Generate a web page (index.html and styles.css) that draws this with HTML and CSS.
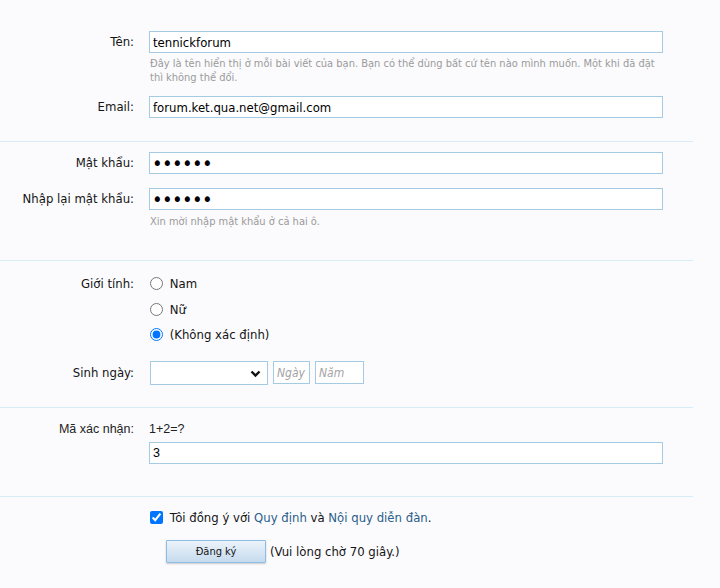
FILE: index.html
```html
<!DOCTYPE html>
<html lang="vi">
<head>
<meta charset="utf-8">
<title>Đăng ký</title>
<link rel="stylesheet" href="styles.css">
</head>
<body>
<form class="form">
  <div class="section s1">
    <div class="row">
      <label class="label">Tên:</label>
      <div class="field">
        <input class="text-input" type="text" value="tennickforum">
        <p class="hint">Đây là tên hiển thị ở mỗi bài viết của bạn. Bạn có thể dùng bất cứ tên nào mình muốn. Một khi đã đặt thì không thể đổi.</p>
      </div>
    </div>
    <div class="row row-email">
      <label class="label">Email:</label>
      <div class="field">
        <input class="text-input" type="text" value="forum.ket.qua.net@gmail.com">
      </div>
    </div>
  </div>

  <div class="section s2">
    <div class="row">
      <label class="label">Mật khẩu:</label>
      <div class="field">
        <input class="text-input pw" type="password" value="123456">
      </div>
    </div>
    <div class="row row-pw2">
      <label class="label">Nhập lại mật khẩu:</label>
      <div class="field">
        <input class="text-input pw" type="password" value="123456">
        <p class="hint hint-pw">Xin mời nhập mật khẩu ở cả hai ô.</p>
      </div>
    </div>
  </div>

  <div class="section s3">
    <div class="row">
      <label class="label label-radio">Giới tính:</label>
      <ul class="radios">
        <li><label><input type="radio" name="g"> Nam</label></li>
        <li><label><input type="radio" name="g"> Nữ</label></li>
        <li><label><input type="radio" name="g" checked> (Không xác định)</label></li>
      </ul>
    </div>
    <div class="row row-dob">
      <label class="label label-dob">Sinh ngày:</label>
      <div class="dob">
        <div class="select-wrap">
          <select class="select"><option></option></select>
          <svg class="chev" width="11" height="8" viewBox="0 0 11 8"><polyline points="1.5,1.5 5.5,5.5 9.5,1.5" fill="none" stroke="#111" stroke-width="2.4"/></svg>
        </div>
        <input class="small-input day" type="text" placeholder="Ngày">
        <input class="small-input year" type="text" placeholder="Năm">
      </div>
    </div>
  </div>

  <div class="section s4">
    <div class="row">
      <label class="label label-cap">Mã xác nhận:</label>
      <div class="field">
        <div class="question">1+2=?</div>
        <input class="text-input cap-input" type="text" value="3">
      </div>
    </div>
  </div>

  <div class="section s5">
    <div class="row">
      <div></div>
      <div class="field">
        <label class="agree"><input type="checkbox" checked> Tôi đồng ý với <a href="#">Quy định</a> và <a href="#">Nội quy diễn đàn</a>.</label>
        <div class="submit-row">
          <button type="button" class="button">Đăng ký</button>
          <span class="wait">(Vui lòng chờ 70 giây.)</span>
        </div>
      </div>
    </div>
  </div>
</form>
</body>
</html>
```
FILE: styles.css
```css
html, body {
  margin: 0;
  background: #fbfbfd;
}
body {
  font-family: "DejaVu Sans Condensed", "DejaVu Sans", sans-serif;
  font-size: 13px;
  color: #141414;
  height: 588px;
  overflow: hidden;
}
.form {
  width: 693px;
  margin: 0;
}
.section {
  border-top: 1px solid #d9ecfa;
}
.section.s1 {
  border-top: 0;
  padding: 31px 0 23px;
}
.section.s2 {
  padding: 10px 0 31px;
}
.section.s3 {
  padding: 10px 0 22px;
}
.section.s4 {
  padding: 12px 0 32px;
}
.section.s5 {
  padding: 11px 0 0;
}
.row {
  display: grid;
  grid-template-columns: 134px 514px;
  column-gap: 15px;
}
.label {
  text-align: right;
  line-height: 22px;
}
.field {
  display: flex;
  flex-direction: column;
}
.text-input {
  box-sizing: border-box;
  width: 514px;
  height: 22px;
  margin: 0;
  border: 1px solid #a5cae4;
  background: #fff;
  padding: 0 3px;
  font-family: "DejaVu Sans Condensed", "DejaVu Sans", sans-serif;
  font-size: 13px;
  color: #000;
  outline: none;
}
.text-input.pw {
  font-size: 20px;
  letter-spacing: -0.6px;
  padding-left: 2px;
}
.hint {
  margin: 4px 0 0;
  font-size: 11px;
  line-height: 14px;
  color: #9a9a9a;
  padding-left: 1px;
}
.hint-pw {
  margin-top: 5px;
}
.row-email {
  margin-top: 11px;
}
.row-pw2 {
  margin-top: 14px;
}
.radios {
  list-style: none;
  margin: 0;
  padding: 0;
}
.radios li {
  height: 25.5px;
  line-height: 25px;
}
.radios input {
  margin: 0 3px 0 1px;
  width: 13px;
  height: 13px;
  vertical-align: -2px;
}
.label-radio {
  line-height: 25px;
}
.row-dob {
  margin-top: 13px;
}
.label-dob {
  line-height: 24px;
}
.dob {
  display: flex;
  align-items: center;
  gap: 5px;
  padding-left: 1px;
}
.select-wrap {
  position: relative;
  width: 118px;
  height: 24px;
}
.select {
  appearance: none;
  -webkit-appearance: none;
  box-sizing: border-box;
  width: 118px;
  height: 24px;
  margin: 0;
  border: 1px solid #a5cae4;
  background: #fff;
  border-radius: 0;
  outline: none;
}
.chev {
  position: absolute;
  right: 7px;
  top: 9px;
  pointer-events: none;
}
.small-input {
  box-sizing: border-box;
  height: 23px;
  margin: 0;
  border: 1px solid #a5cae4;
  background: #fff;
  padding: 0 3px;
  font-family: "DejaVu Sans Condensed", "DejaVu Sans", sans-serif;
  font-size: 12px;
  font-style: italic;
  outline: none;
}
.small-input::placeholder {
  color: #a3a3a3;
}
.day { width: 37px; }
.year { width: 49px; }
.label-cap {
  font-family: "Liberation Sans", Arial, sans-serif;
  font-size: 12.5px;
  line-height: 19px;
  color: #222;
}
.question {
  font-family: "Liberation Sans", Arial, sans-serif;
  font-size: 12.5px;
  line-height: 19px;
  color: #222;
  margin-bottom: 3px;
}
.cap-input {
  font-family: "Liberation Sans", Arial, sans-serif;
  font-size: 12.5px;
}
.agree {
  line-height: 20px;
}
.agree input {
  margin: 0 3px 0 1px;
  width: 13px;
  height: 13px;
  vertical-align: -2px;
}
.agree a {
  color: #2a5d8a;
  text-decoration: none;
}
.submit-row {
  margin-top: 12px;
  padding-left: 17px;
  display: flex;
  align-items: center;
  gap: 4px;
}
.button {
  box-sizing: border-box;
  width: 100px;
  height: 23px;
  margin: 0;
  border: 1px solid #8dbde3;
  border-radius: 1px;
  background: linear-gradient(#ebf3fa, #c6dbee);
  box-shadow: 0 1px 2px rgba(0, 0, 0, 0.2);
  font-family: "DejaVu Sans Condensed", "DejaVu Sans", sans-serif;
  font-size: 11px;
  color: #141414;
  padding: 0;
}
.wait {
  font-size: 13px;
}
```
